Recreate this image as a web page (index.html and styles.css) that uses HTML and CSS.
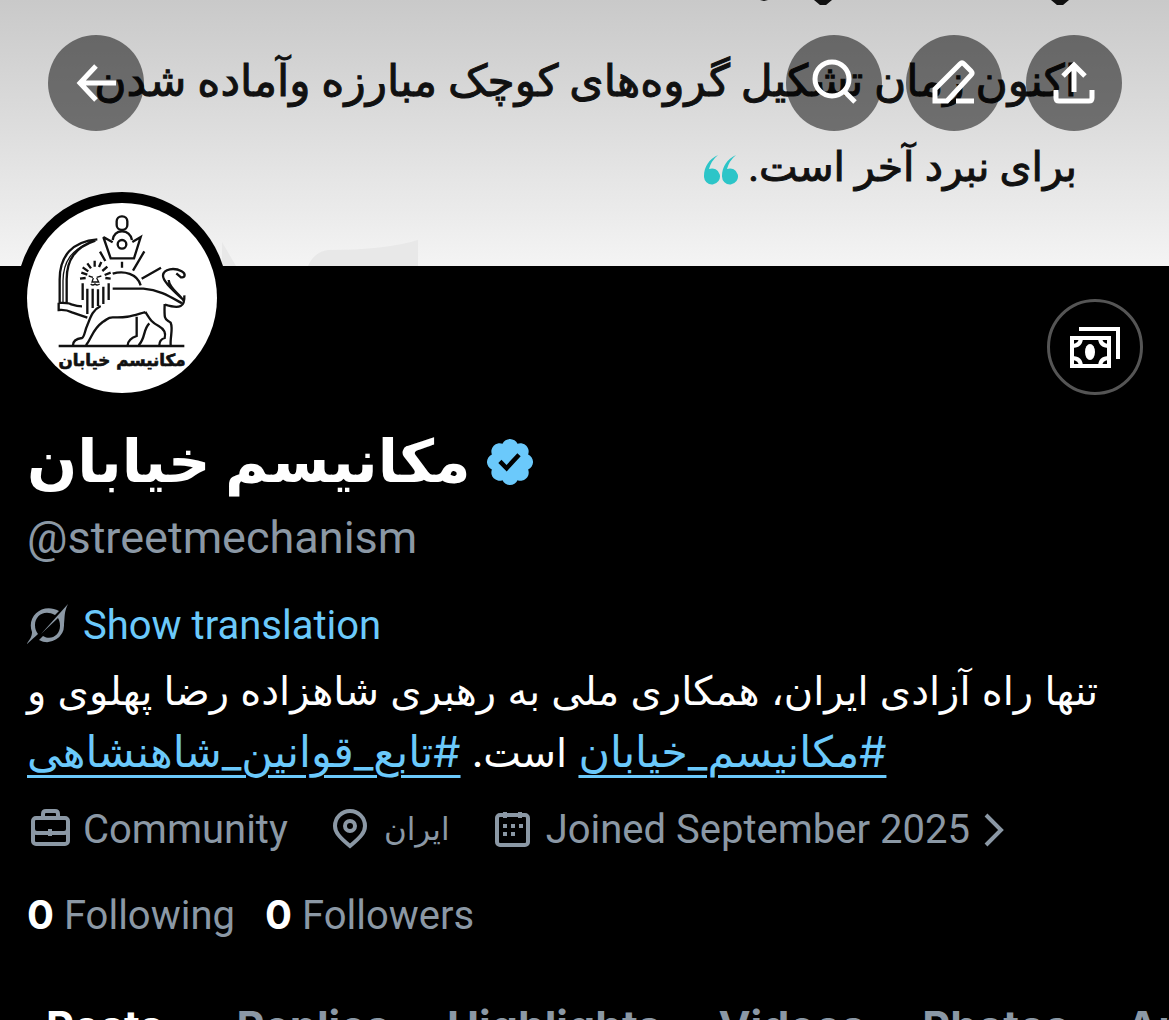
FILE: index.html
```html
<!DOCTYPE html>
<html lang="en">
  <head>
    <meta charset="UTF-8" />
    <meta name="viewport" content="width=device-width, initial-scale=1.0" />
    <title>مکانیسم خیابان (@streetmechanism)</title>
    <link rel="stylesheet" href="styles.css">
  </head>
  <body>
    <header class="banner">
      <svg class="banner-dots" viewBox="0 0 310 6" aria-hidden="true">
        <path d="M54 0h18l-6 5h-6zM291 0h18l-6 5h-6zM0 0h8l-4 1z" />
      </svg>
      <svg class="banner-shape" viewBox="0 0 200 28" aria-hidden="true">
        <path d="M0 4l14 24H0zM86 28q6-14 20-16 58 0 90-10v26z" />
      </svg>
      <div class="banner-text" dir="rtl">
        <p>اکنون زمان تشکیل گروه‌های کوچک مبارزه وآماده شدن</p>
        <p class="last">
          برای نبرد آخر است.
          <svg class="quote" viewBox="0 0 34 30" aria-hidden="true">
            <path d="M14 0C5 4 0 12 0 21a8 8 0 1 0 5-7Q7 6 14 0zM32 0C23 4 18 12 18 21a8 8 0 1 0 5-7Q25 6 32 0z" />
          </svg>
        </p>
      </div>
      <nav class="toolbar">
        <button class="round" aria-label="Back">
          <svg viewBox="0 0 96 96"><path d="M68 48H32M48 31L32 48l16 17" /></svg>
        </button>
        <button class="round push" aria-label="Search">
          <svg viewBox="0 0 96 96"><circle cx="46" cy="44" r="17" /><path d="M58 56l11 11" /></svg>
        </button>
        <button class="round" aria-label="Edit">
          <svg viewBox="0 0 96 96"><path d="M29 66V54l25-25q2-2 4 0l7 7q2 2 0 4L41 66zM50 66h18" /></svg>
        </button>
        <button class="round" aria-label="Share">
          <svg viewBox="0 0 96 96"><path d="M48 57V30M37 41l11-11 11 11M30 55v8q0 3 3 3h30q3 0 3-3v-8" /></svg>
        </button>
      </nav>
    </header>

    <main class="profile">
      <div class="profile-top">
        <svg class="avatar" viewBox="81 69 570 570" role="img" aria-label="Profile picture">
          <!-- crown -->
          <rect x="350" y="109" width="32" height="41" rx="15" />
          <path d="M338 180q4-26 28-26t30 26M310 171l22 64h70l20-64-25 15M310 171l28 16" />
          <circle cx="366" cy="193" r="13" />
          <!-- rays and sun -->
          <path d="M366 245v18M300 215l16 28M433 214l-34 58M483 263l-58 33M338 281c34-10 74 0 84 35" />
          <!-- sword -->
          <path d="M292 178c-75 6-113 50-113 120v70M286 182c-60 20-86 56-86 116v70M176 368q28 0 38 5 18 6 32 6M176 368v22q22-2 40 7l46 16" />
          <path class="thin" d="M270 186c-54 24-80 56-81 116v66" />
          <!-- mane and face -->
          <path d="M248 360v-50M262 402v-76M278 384v-58M294 378v-50M310 372v-52M326 360v-50M244 278l18 6M240 296l17-2M248 262l17 12M262 250l11 15M284 242v18M304 246l-7 15M322 260l-15 13M332 278l-18 7M332 296l-16-2" />
          <path class="thin" d="M266 288l13 4M290 292l14-4M280 294l-4 12h20l-6-12M272 312q7 6 13 0 6 6 14 0" />
          <!-- body and legs -->
          <path d="M338 326h92c50 4 80 24 116 44M302 378c-24 12-30 32-40 58-8 16-8 34-16 38-15 2-27 8-27 22M258 496c20-26 18-46 50-70 15-8 14-14 30-14 44 2 56-4 98-16M436 396c14 22 18 30 40 42 18 10 22 22 18 36-14 4-16 12-16 22M494 372c-2 54 2 44 18 56 8 18-2 44 0 68M410 410v58c-12 4-26 12-27 28M448 430c-20 20-10 42-32 66" />
          <!-- tail -->
          <path d="M546 356c-34-32-58-54-57-70 2-20 34-24 56-12 14 8 10 20-2 18l-14-12M553 346c2 34-12 42-58 28M552 364c-12-22-44-38-46-64" />
          <path d="M176 498h377" />
          <text x="366" y="558" text-anchor="middle">مکانیسم خیابان</text>
        </svg>
        <button class="money" aria-label="Payments">
          <svg viewBox="0 0 96 96">
            <path d="M32 30h39v30" />
            <path d="M25 39h37v28H25z" />
            <path d="M34 38q0 9-9 9M53 38q0 9 9 9M25 59q9 0 9 9M62 59q-9 0-9 9" />
            <ellipse cx="43" cy="53" rx="5" ry="8" />
          </svg>
        </button>
      </div>

      <h1 class="name">
        <span dir="rtl">مکانیسم خیابان</span>
        <svg class="verified" viewBox="0 0 22 22" aria-label="Verified">
          <path d="M20.396 11c-.018-.646-.215-1.275-.57-1.816-.354-.54-.852-.972-1.438-1.246.223-.607.27-1.264.14-1.897-.131-.634-.437-1.218-.882-1.687-.47-.445-1.053-.75-1.687-.882-.633-.13-1.29-.083-1.897.14-.273-.587-.704-1.086-1.245-1.44S11.647 1.62 11 1.604c-.646.017-1.273.213-1.813.568s-.969.854-1.24 1.44c-.608-.223-1.267-.272-1.902-.14-.635.13-1.22.436-1.69.882-.445.47-.749 1.055-.878 1.688-.13.633-.08 1.29.144 1.896-.587.274-1.087.705-1.443 1.245-.356.54-.555 1.17-.574 1.817.02.647.218 1.276.574 1.817.356.54.856.972 1.443 1.245-.224.606-.274 1.263-.144 1.896.13.634.433 1.218.877 1.688.47.443 1.054.747 1.687.878.633.132 1.29.084 1.897-.136.274.586.705 1.084 1.246 1.439.54.354 1.17.551 1.816.569.647-.016 1.276-.213 1.817-.567s.972-.854 1.245-1.44c.604.239 1.266.296 1.903.164.636-.132 1.22-.447 1.68-.907.46-.46.776-1.044.908-1.681s.075-1.299-.165-1.903c.586-.274 1.084-.705 1.439-1.246.354-.54.551-1.17.569-1.816zM9.662 14.85l-3.429-3.428 1.293-1.302 2.072 2.072 4.4-4.794 1.347 1.246z" />
        </svg>
      </h1>
      <p class="handle">@streetmechanism</p>

      <button class="translate">
        <svg viewBox="0 0 44 44" aria-hidden="true">
          <path d="M14 30L41 0c-4 8-3 12-4 20A17 17 0 0 1 12 36l4-4c8 5 17-1 17-10 0-4-1-6-2-8zM28 11C17 5 8 12 8 21c0 4 1 6 3 9C7 34 4 36-1 41c4-6 6-8 6-13C-1 12 16-2 32 7z" />
        </svg>
        Show translation
      </button>

      <p class="bio" dir="rtl">
        تنها راه آزادی ایران، همکاری ملی به رهبری شاهزاده رضا پهلوی و<br />
        <a href="#">#مکانیسم_خیابان</a> است. <a href="#">#تابع_قوانین_شاهنشاهی</a>
      </p>

      <div class="meta">
        <span class="meta-item">
          <svg viewBox="0 2 44 44" aria-hidden="true"><rect x="6" y="12" width="35" height="26" rx="3" /><path d="M16 12V8q0-3 3-3h9q3 0 3 3v4M6 23q0 4 4 4h27q4 0 4-4M23 23v7" /></svg>
          Community
        </span>
        <span class="meta-item">
          <svg viewBox="0 2 44 44" aria-hidden="true"><path d="M22 40C11 31 7 26 7 20a15 15 0 0 1 30 0c0 6-4 11-15 20z" /><circle cx="22" cy="20" r="5" /></svg>
          <span class="place" dir="rtl">ایران</span>
        </span>
        <a class="meta-item" href="#">
          <svg viewBox="0 2 44 44" aria-hidden="true"><rect x="7" y="9" width="31" height="30" rx="3" /><path d="M15 6v6M30 6v6M13 20h4m4 0h4m4 0h4M13 28h4m4 0h4" /></svg>
          Joined September 2025
          <svg class="chevron" viewBox="0 0 22 44" aria-hidden="true"><path d="M4 7l15 15L4 37" /></svg>
        </a>
      </div>

      <div class="counts">
        <a href="#"><b>0</b> Following</a>
        <a href="#"><b>0</b> Followers</a>
      </div>
    </main>

    <nav class="tabs">
      <a class="active" href="#">Posts</a>
      <a href="#">Replies</a>
      <a href="#">Highlights</a>
      <a href="#">Videos</a>
      <a href="#">Photos</a>
      <a href="#">Articles</a>
    </nav>
  </body>
</html>
```
FILE: styles.css
```css
* {
  box-sizing: border-box;
}
body {
  height: 100vh;
  margin: 0;
  overflow: hidden;
  background: #000;
  color: #8b98a5;
  font-family: Roboto, "DejaVu Sans", sans-serif;
  font-size: 40px;
  line-height: 52px;
}
h1,
p {
  margin: 0;
}
a {
  color: inherit;
  text-decoration: none;
}
button {
  padding: 0;
  border: 0;
  font: inherit;
  cursor: pointer;
}
svg {
  flex-shrink: 0;
  fill: none;
  stroke: currentColor;
}

/* banner */
.banner {
  position: relative;
  height: 266px;
  overflow: hidden;
  background: linear-gradient(#c9c9c9, #dedede 50%, #f4f4f4);
}
.banner-text {
  padding: 38px 92px 0 0;
  color: #111;
  font-size: 44px;
  line-height: 86px;
  white-space: nowrap;
  -webkit-text-stroke: 1px #111;
}
.banner-text .last {
  font-size: 41px;
}
.quote {
  width: 34px;
  height: 30px;
  fill: #2cc5c8;
  stroke: none;
  vertical-align: middle;
}
.banner-dots {
  position: absolute;
  top: 0;
  right: 99px;
  width: 310px;
  fill: #111;
  stroke: none;
}
.banner-shape {
  position: absolute;
  bottom: 0;
  left: 222px;
  width: 200px;
  fill: #e8e8e8;
  stroke: none;
}
.toolbar {
  position: absolute;
  top: 35px;
  left: 48px;
  right: 47px;
  display: flex;
  gap: 24px;
}
.round {
  width: 96px;
  height: 96px;
  border-radius: 50%;
  background: rgba(0, 0, 0, 0.5);
  color: #fff;
}
.round svg {
  display: block;
  stroke-width: 5;
}
.push {
  margin-left: auto;
}

/* profile */
.profile {
  padding: 0 26px 0 27px;
}
.profile-top {
  display: flex;
  justify-content: space-between;
  height: 127px;
}
.avatar {
  position: relative;
  width: 190px;
  height: 190px;
  margin-top: -63px;
  border-radius: 50%;
  background: #fff;
  box-shadow: 0 0 0 11px #000;
  color: #111;
  stroke-width: 7;
}
.avatar .thin {
  stroke-width: 4;
}
.avatar text {
  fill: #111;
  stroke: #111;
  stroke-width: 2;
  font-family: "DejaVu Sans", sans-serif;
  font-size: 50px;
  font-weight: 700;
}
.money {
  width: 96px;
  height: 96px;
  margin-top: 33px;
  border: 3px solid #555;
  border-radius: 50%;
  background: none;
  color: #fff;
}
.money svg {
  display: block;
  width: 96px;
  margin: -3px;
  stroke-width: 4;
}
.money ellipse {
  fill: #fff;
  stroke: none;
}
.name {
  display: flex;
  align-items: center;
  gap: 12px;
  margin-top: 29px;
  color: #fff;
  font-size: 59px;
  font-weight: 700;
  line-height: 80px;
}
.verified {
  width: 54px;
  height: 54px;
  fill: #6bc9fb;
  stroke: none;
}
.handle {
  margin-top: 10px;
  font-size: 45px;
}
.translate {
  display: flex;
  align-items: center;
  gap: 12px;
  margin-top: 36px;
  background: none;
  color: #6bc9fb;
}
.translate svg {
  width: 44px;
  height: 44px;
  fill: #8b98a5;
  stroke: none;
}
.bio {
  margin-top: 8px;
  color: #fff;
  font-family: Inter, "DejaVu Sans", sans-serif;
  line-height: 61px;
  text-align: left;
  white-space: nowrap;
}
.bio a {
  color: #6bc9fb;
  font-size: 43px;
  text-decoration: underline 3px;
  text-underline-offset: 8px;
}
.meta {
  display: flex;
  gap: 40px;
  margin-top: 21px;
}
.meta-item {
  display: flex;
  align-items: center;
  gap: 12px;
  white-space: nowrap;
}
.meta svg {
  width: 44px;
  height: 44px;
  stroke-width: 4;
}
.meta .chevron {
  width: 22px;
}
.place {
  font-size: 31px;
}
.counts {
  display: flex;
  gap: 30px;
  margin-top: 33px;
}
.counts b {
  color: #fff;
  font-family: Inter, sans-serif;
}

/* tabs */
.tabs {
  display: flex;
  gap: 57px;
  margin-top: 58px;
  padding-left: 46px;
  overflow: hidden;
  font-family: Inter, sans-serif;
  font-size: 43px;
  font-weight: 700;
}
.tabs .active {
  margin-right: 16px;
  color: #fff;
}
```
